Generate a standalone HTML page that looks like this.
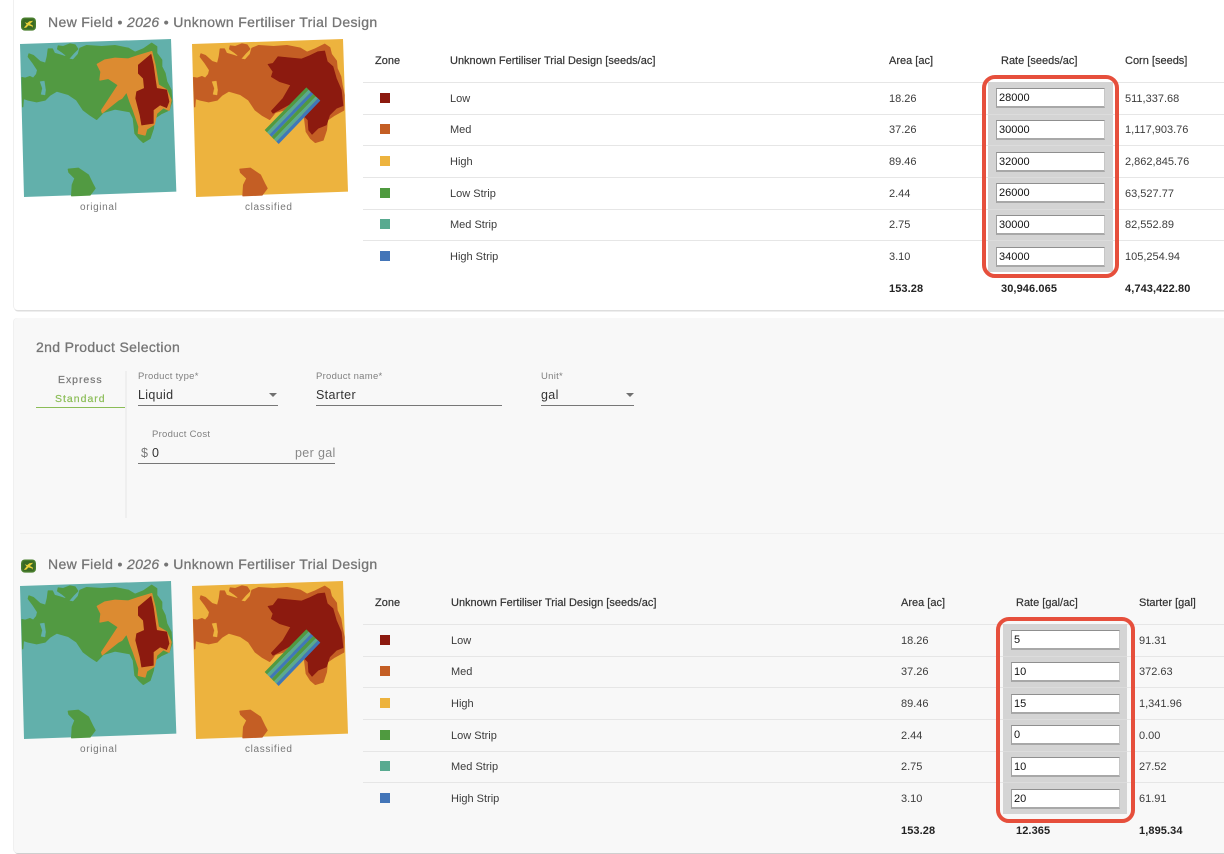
<!DOCTYPE html>
<html><head><meta charset="utf-8"><style>
html,body{margin:0;padding:0;background:#fff;width:1224px;height:854px;overflow:hidden}
body{position:relative;font-family:"Liberation Sans",sans-serif}
.a{position:absolute}
.t{position:absolute;white-space:nowrap;line-height:14px;font-size:11px;color:#3c3c3c;margin-top:1px}
.h{font-size:11px;color:#333;-webkit-text-stroke:.2px #333}
.b{font-weight:700;color:#222;letter-spacing:.1px}
.ti{position:absolute;left:48px;white-space:nowrap;font-size:14px;line-height:18px;color:#757575;letter-spacing:.34px;-webkit-text-stroke:.3px #757575}
.l{position:absolute;height:1px;background:#e6e6e6;left:363px;right:0}
.s{position:absolute;left:380px;width:9.5px;height:10px}
.i{position:absolute;box-sizing:border-box;width:109px;height:20px;background:#fff;border:1px solid #c6c6c6;border-top-color:#8f8f8f;border-left-color:#a0a0a0;border-bottom:2px solid #a8a8a8;font-size:11px;line-height:18px;padding-left:2px;color:#111}
.g{position:absolute;background:#d4d4d4}
.r{position:absolute;box-sizing:border-box;border:4.5px solid #e64f3c;border-radius:13px}
.c{position:absolute;font-size:10px;color:#777;text-align:center;white-space:nowrap;line-height:12px;letter-spacing:.65px}
.lab{position:absolute;font-size:9.5px;line-height:12px;color:#808080;white-space:nowrap;letter-spacing:.28px;margin-top:1px}
.val{position:absolute;font-size:12.5px;line-height:16px;color:#333;white-space:nowrap;letter-spacing:.35px;margin-top:1px}
.u{position:absolute;height:1px;background:#777}
.ar{position:absolute;width:0;height:0;border-left:4.5px solid transparent;border-right:4.5px solid transparent;border-top:4px solid #707070}
</style></head><body>

<svg width="0" height="0" style="position:absolute">
<defs>
<symbol id="orig" viewBox="0 0 495 510">
<polygon points="15,27 468,12 484,470 27,486" fill="#62b0ab"/>
<g stroke-width="4" stroke-linejoin="round">
<path fill="#529a42" stroke="#529a42" d="M21,128L30,130L45,125L55,130L65,118L68,105L55,85L40,65L42,57L55,62L75,80L92,85L97,65L100,42L112,42L118,55L135,60L150,65L155,62L140,50L128,42L130,33L145,35L165,27L180,30L188,42L175,55L160,72L175,75L190,58L195,40L215,32L260,35L300,32L340,40L360,52L385,42L410,25L425,35L425,55L440,75L440,95L450,115L455,140L468,165L470,200L462,225L440,235L418,250L415,280L405,310L385,322L372,310L360,295L355,250L345,230L300,222L265,232L245,253L225,240L205,225L185,195L160,178L125,168L105,180L90,195L65,200L40,195L25,190L23,215Z"/>
<path fill="#62b0ab" stroke="#62b0ab" stroke-width="1" d="M75,140L88,138L92,165L90,180L78,178L82,160Z"/>
<path fill="#dc8b31" stroke="#dc8b31" d="M247,88L270,75L300,70L340,72L370,62L410,50L420,90L430,150L455,165L468,195L462,226L445,218L425,235L418,268L395,282L390,300L370,295L372,275L355,225L345,200L335,170L320,190L310,195L262,233L260,226L310,150L280,130L255,135L258,110Z"/>
<path fill="#8c1a0f" stroke="#8c1a0f" stroke-width="2" d="M370,90L408,58L415,90L422,140L425,160L455,165L462,200L455,218L435,210L415,225L415,265L380,270L375,240L362,190L365,170L388,160L385,130L370,115Z"/>
<path fill="#529a42" stroke="#529a42" d="M160,403L190,400L220,420L232,445L240,460L225,480L170,482L172,450L180,430L162,412Z"/>
</g>
</symbol>
<symbol id="clas" viewBox="0 0 495 510">
<polygon points="12,27 465,12 480,470 24,486" fill="#edb33e"/>
<g stroke-width="4" stroke-linejoin="round">
<path fill="#c45e24" stroke="#c45e24" d="M17,128L27,130L42,125L52,130L62,118L65,105L52,85L37,65L39,57L52,62L72,80L89,85L94,65L97,42L109,42L115,55L132,60L147,65L152,62L137,50L125,42L127,33L142,35L162,27L177,30L185,42L172,55L157,72L172,75L187,58L192,40L212,32L257,35L297,32L337,40L357,52L382,42L410,28L425,38L430,58L445,78L447,100L458,125L462,150L468,180L467,225L440,240L418,255L415,285L405,315L382,322L368,310L355,290L350,250L342,230L297,222L262,232L245,253L222,240L202,225L182,195L157,178L122,168L102,180L87,195L62,200L37,195L22,190L20,215Z"/>
<path fill="#edb33e" stroke="#edb33e" stroke-width="1" d="M72,140L85,138L89,165L87,180L75,178L79,160Z"/>
<path fill="#8c1a0f" stroke="#8c1a0f" stroke-width="2" d="M240,88L255,85L270,65L300,68L340,72L365,62L390,50L410,48L418,80L435,95L445,130L460,165L465,212L445,220L425,240L415,270L390,280L372,298L362,285L360,255L350,245L397,197L355,157L310,205L255,235L250,228L285,190L308,150L275,140L250,125L255,110Z"/>
<path fill="#c45e24" stroke="#c45e24" d="M156,403L187,400L217,420L229,445L237,460L222,480L165,482L167,450L177,430L158,412Z"/>
</g>
<polygon points="355,157 362,164 237,292 230,285" fill="#4f9a42"/>
<polygon points="362,164 369,171 244,299 237,292" fill="#58aa90"/>
<polygon points="369,171 376,177 251,306 244,299" fill="#3f78b8"/>
<polygon points="376,177 383,184 258,313 251,306" fill="#4f9a42"/>
<polygon points="383,184 390,190 265,320 258,313" fill="#58aa90"/>
<polygon points="390,190 397,197 272,327 265,320" fill="#3f78b8"/>
</symbol>
<symbol id="logo" viewBox="0 0 16 14">
<rect x="0" y="0" width="16" height="14" rx="4" fill="#4a7f2e"/>
<rect x="1.5" y="1.5" width="13" height="11" rx="3" fill="#3a6a24"/>
<path fill="#e8d03a" d="M3,11L6,7.5L4,5L6.5,6L9,4L13,3.5L11,5.5L9.5,7L12.5,8.5L12.5,11L11.5,9.5L8,8.5L5.5,11Z"/>
</symbol>
</defs>
</svg>

<!-- top card -->
<div class="a" style="left:14px;top:-6px;right:-6px;height:316px;background:#fff;border-radius:4px;box-shadow:-1px 0 0 #f0f0f0,0 1.5px 0 #dedede"></div>
<!-- second card -->
<div class="a" style="left:14px;top:318px;right:-6px;height:535px;background:#f8f8f8;border-radius:4px;box-shadow:-1px 0 0 #f0f0f0,0 1px 0 #cfcfcf"></div>
<div class="a" style="left:20px;right:0;top:533px;height:1px;background:#f0f0f0"></div>

<!-- SECTION 1 -->
<svg class="a" style="left:21px;top:17px" width="15" height="14"><use href="#logo"/></svg>
<div class="ti" style="top:13px">New Field • <i>2026</i> • Unknown Fertiliser Trial Design</div>
<svg class="a" style="left:15px;top:35px" width="165" height="170"><use href="#orig"/></svg>
<svg class="a" style="left:188px;top:35px" width="165" height="170"><use href="#clas"/></svg>
<div class="c" style="left:80px;top:202px">original</div>
<div class="c" style="left:245px;top:202px">classified</div>

<div class="t h" style="left:375px;top:53px">Zone</div>
<div class="t h" style="left:450px;top:53px">Unknown Fertiliser Trial Design [seeds/ac]</div>
<div class="t h" style="left:889px;top:53px">Area [ac]</div>
<div class="t h" style="left:1001px;top:53px">Rate [seeds/ac]</div>
<div class="t h" style="left:1125px;top:53px">Corn [seeds]</div>

<div class="l" style="top:82px"></div><div class="l" style="top:114px"></div><div class="l" style="top:145px"></div><div class="l" style="top:177px"></div><div class="l" style="top:209px"></div><div class="l" style="top:240px"></div>

<div class="s" style="top:93px;background:#8c1a0f"></div><div class="t" style="left:450px;top:91px">Low</div><div class="t" style="left:889px;top:91px">18.26</div><div class="t" style="left:1125px;top:91px">511,337.68</div>
<div class="s" style="top:124px;background:#c45e24"></div><div class="t" style="left:450px;top:122px">Med</div><div class="t" style="left:889px;top:122px">37.26</div><div class="t" style="left:1125px;top:122px">1,117,903.76</div>
<div class="s" style="top:156px;background:#edb33e"></div><div class="t" style="left:450px;top:154px">High</div><div class="t" style="left:889px;top:154px">89.46</div><div class="t" style="left:1125px;top:154px">2,862,845.76</div>
<div class="s" style="top:188px;background:#4f9a3f"></div><div class="t" style="left:450px;top:186px">Low Strip</div><div class="t" style="left:889px;top:186px">2.44</div><div class="t" style="left:1125px;top:186px">63,527.77</div>
<div class="s" style="top:219px;background:#58aa90"></div><div class="t" style="left:450px;top:217px">Med Strip</div><div class="t" style="left:889px;top:217px">2.75</div><div class="t" style="left:1125px;top:217px">82,552.89</div>
<div class="s" style="top:251px;background:#4375b8"></div><div class="t" style="left:450px;top:249px">High Strip</div><div class="t" style="left:889px;top:249px">3.10</div><div class="t" style="left:1125px;top:249px">105,254.94</div>

<div class="t b" style="left:889px;top:281px">153.28</div>
<div class="t b" style="left:1001px;top:281px">30,946.065</div>
<div class="t b" style="left:1125px;top:281px">4,743,422.80</div>

<div class="g" style="left:988px;top:82px;width:125px;height:190px"></div>
<div class="l" style="left:988px;width:125px;top:114px;background:#dcdcdc"></div><div class="l" style="left:988px;width:125px;top:145px;background:#dcdcdc"></div><div class="l" style="left:988px;width:125px;top:177px;background:#dcdcdc"></div><div class="l" style="left:988px;width:125px;top:209px;background:#dcdcdc"></div><div class="l" style="left:988px;width:125px;top:240px;background:#dcdcdc"></div>
<div class="i" style="left:996px;top:88px">28000</div>
<div class="i" style="left:996px;top:120px">30000</div>
<div class="i" style="left:996px;top:152px">32000</div>
<div class="i" style="left:996px;top:183px">26000</div>
<div class="i" style="left:996px;top:215px">30000</div>
<div class="i" style="left:996px;top:247px">34000</div>
<div class="r" style="left:982px;top:75px;width:137px;height:203px"></div>

<!-- FORM -->
<div class="ti" style="left:36px;top:338px">2nd Product Selection</div>
<div class="t" style="left:58px;top:372px;font-size:10.5px;color:#777;letter-spacing:.95px;-webkit-text-stroke:.2px #777">Express</div>
<div class="t" style="left:55px;top:391px;font-size:10.5px;color:#8bbd57;letter-spacing:1px;-webkit-text-stroke:.2px #8bbd57">Standard</div>
<div class="a" style="left:36px;top:407px;width:89px;height:1px;background:#8bbd57"></div>
<div class="a" style="left:125px;top:371px;width:2px;height:147px;background:#efefef"></div>

<div class="lab" style="left:138px;top:370px">Product type*</div>
<div class="val" style="left:138px;top:386px">Liquid</div>
<div class="ar" style="left:269px;top:393px"></div>
<div class="u" style="left:138px;top:405px;width:140px"></div>

<div class="lab" style="left:316px;top:370px">Product name*</div>
<div class="val" style="left:316px;top:386px">Starter</div>
<div class="u" style="left:316px;top:405px;width:186px"></div>

<div class="lab" style="left:541px;top:370px">Unit*</div>
<div class="val" style="left:541px;top:386px">gal</div>
<div class="ar" style="left:626px;top:393px"></div>
<div class="u" style="left:541px;top:405px;width:93px"></div>

<div class="lab" style="left:152px;top:428px">Product Cost</div>
<div class="val" style="left:141px;top:444px;color:#777">$</div>
<div class="val" style="left:152px;top:444px">0</div>
<div class="val" style="left:295px;top:444px;color:#888">per gal</div>
<div class="u" style="left:138px;top:463px;width:197px"></div>

<!-- SECTION 2 -->
<svg class="a" style="left:21px;top:559px" width="15" height="14"><use href="#logo"/></svg>
<div class="ti" style="top:555px">New Field • <i>2026</i> • Unknown Fertiliser Trial Design</div>
<svg class="a" style="left:15px;top:577px" width="165" height="170"><use href="#orig"/></svg>
<svg class="a" style="left:188px;top:577px" width="165" height="170"><use href="#clas"/></svg>
<div class="c" style="left:80px;top:744px">original</div>
<div class="c" style="left:245px;top:744px">classified</div>

<div class="t h" style="left:375px;top:595px">Zone</div>
<div class="t h" style="left:451px;top:595px">Unknown Fertiliser Trial Design [seeds/ac]</div>
<div class="t h" style="left:901px;top:595px">Area [ac]</div>
<div class="t h" style="left:1016px;top:595px">Rate [gal/ac]</div>
<div class="t h" style="left:1139px;top:595px">Starter [gal]</div>

<div class="l" style="top:624px"></div><div class="l" style="top:656px"></div><div class="l" style="top:687px"></div><div class="l" style="top:719px"></div><div class="l" style="top:751px"></div><div class="l" style="top:782px"></div>

<div class="s" style="top:635px;background:#8c1a0f"></div><div class="t" style="left:451px;top:633px">Low</div><div class="t" style="left:901px;top:633px">18.26</div><div class="t" style="left:1139px;top:633px">91.31</div>
<div class="s" style="top:666px;background:#c45e24"></div><div class="t" style="left:451px;top:664px">Med</div><div class="t" style="left:901px;top:664px">37.26</div><div class="t" style="left:1139px;top:664px">372.63</div>
<div class="s" style="top:698px;background:#edb33e"></div><div class="t" style="left:451px;top:696px">High</div><div class="t" style="left:901px;top:696px">89.46</div><div class="t" style="left:1139px;top:696px">1,341.96</div>
<div class="s" style="top:730px;background:#4f9a3f"></div><div class="t" style="left:451px;top:728px">Low Strip</div><div class="t" style="left:901px;top:728px">2.44</div><div class="t" style="left:1139px;top:728px">0.00</div>
<div class="s" style="top:761px;background:#58aa90"></div><div class="t" style="left:451px;top:759px">Med Strip</div><div class="t" style="left:901px;top:759px">2.75</div><div class="t" style="left:1139px;top:759px">27.52</div>
<div class="s" style="top:793px;background:#4375b8"></div><div class="t" style="left:451px;top:791px">High Strip</div><div class="t" style="left:901px;top:791px">3.10</div><div class="t" style="left:1139px;top:791px">61.91</div>

<div class="t b" style="left:901px;top:823px">153.28</div>
<div class="t b" style="left:1016px;top:823px">12.365</div>
<div class="t b" style="left:1139px;top:823px">1,895.34</div>

<div class="g" style="left:1003px;top:624px;width:124px;height:190px"></div>
<div class="l" style="left:1003px;width:124px;top:656px;background:#dcdcdc"></div><div class="l" style="left:1003px;width:124px;top:687px;background:#dcdcdc"></div><div class="l" style="left:1003px;width:124px;top:719px;background:#dcdcdc"></div><div class="l" style="left:1003px;width:124px;top:751px;background:#dcdcdc"></div><div class="l" style="left:1003px;width:124px;top:782px;background:#dcdcdc"></div>
<div class="i" style="left:1011px;top:630px">5</div>
<div class="i" style="left:1011px;top:662px">10</div>
<div class="i" style="left:1011px;top:694px">15</div>
<div class="i" style="left:1011px;top:725px">0</div>
<div class="i" style="left:1011px;top:757px">10</div>
<div class="i" style="left:1011px;top:789px">20</div>
<div class="r" style="left:996px;top:617px;width:139px;height:206px"></div>

</body></html>
